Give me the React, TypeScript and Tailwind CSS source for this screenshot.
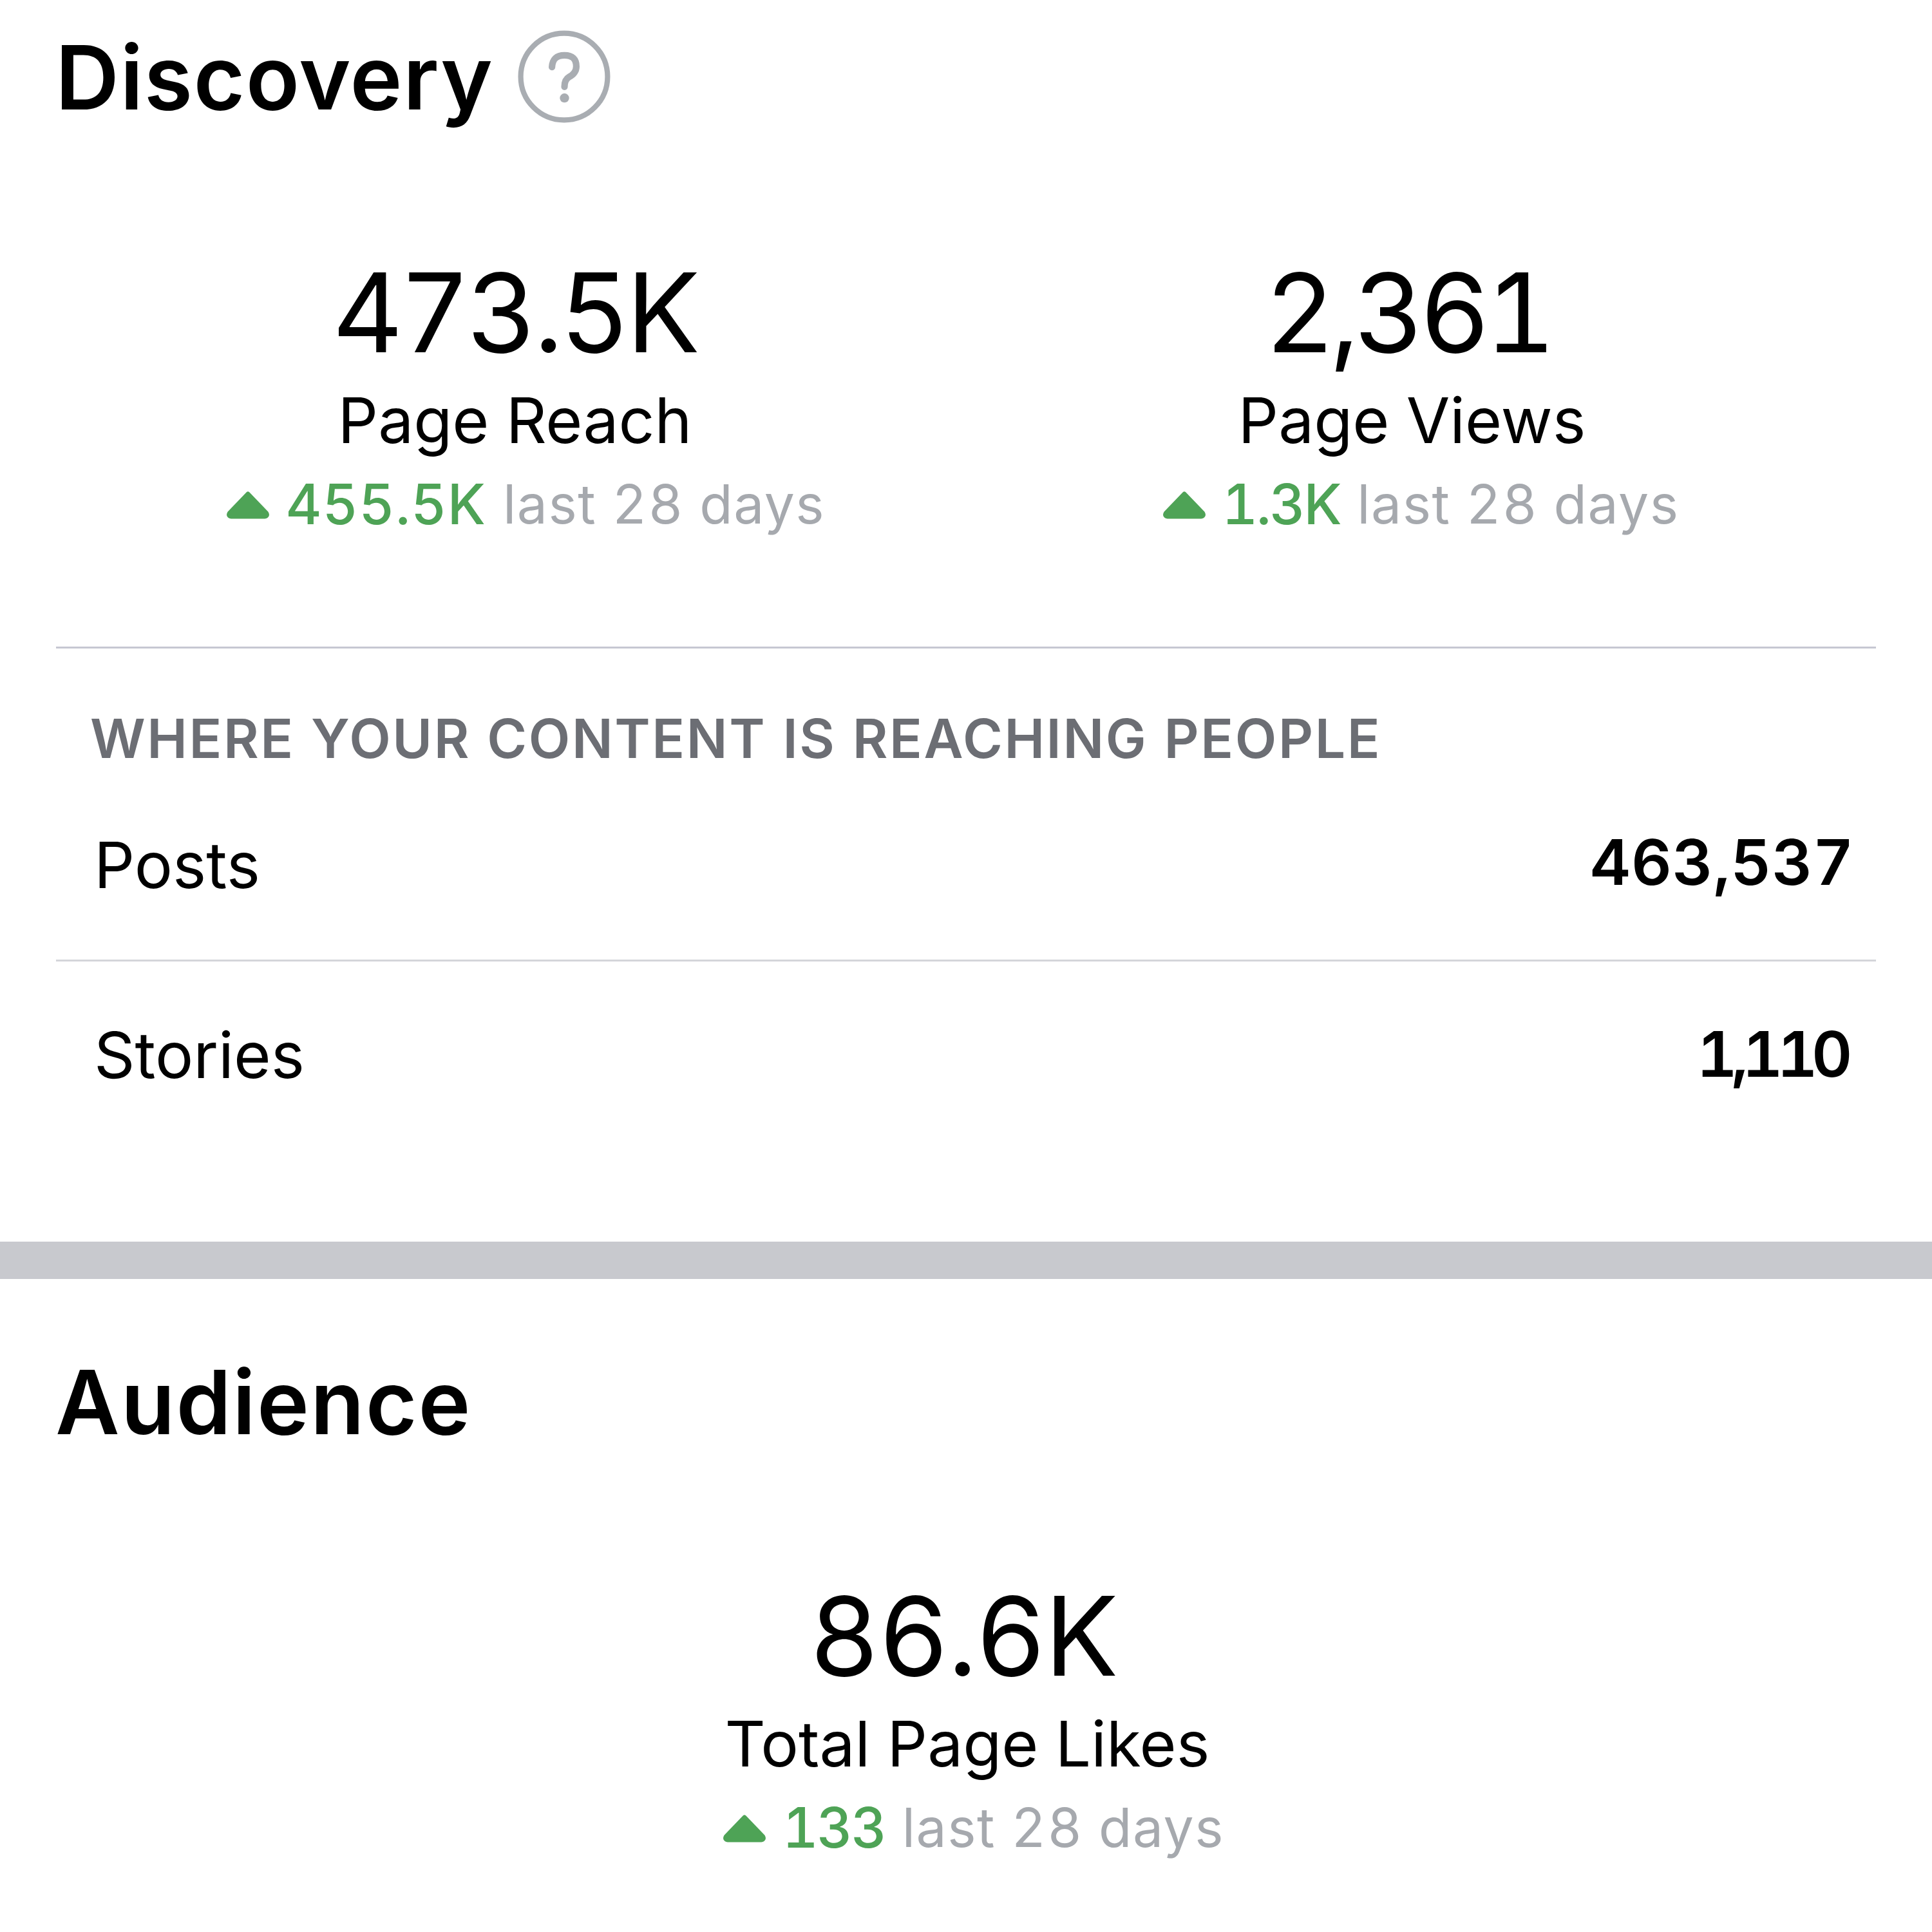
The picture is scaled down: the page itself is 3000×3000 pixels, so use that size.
function Caret() {
  return (
    <svg viewBox="0 0 68 44" className="w-[70px] h-[46px] shrink-0 mr-[24px] mt-[2px]">
      <path d="M34 5 L62 34 Q65 39 59 40 L9 40 Q3 39 6 34 Z" fill="#4ea356" stroke="#4ea356" strokeWidth="6" strokeLinejoin="round" />
    </svg>
  );
}

function Stat({ value, label, delta, a, b, c, d }: { value: string; label: string; delta: string; a: string; b: string; c: string; d: string }) {
  return (
    <div className="flex flex-col items-center">
      <div className={`h-[206px] leading-[206px] text-[170px] text-black ${a}`}>{value}</div>
      <div className={`h-[130px] leading-[130px] text-[98px] text-black ${b}`}>{label}</div>
      <div className={`h-[130px] flex items-center text-[84px] leading-[130px] ${c}`}>
        <Caret />
        <span className={`font-[550] text-[86px] text-[#4ea356] mr-[26px] ${d}`}>{delta}</span>
        <span className="text-[#a6a9ae] tracking-[1.5px]">last 28 days</span>
      </div>
    </div>
  );
}

export default function App() {
  return (
    <div className="w-[3000px] h-[3000px] bg-white overflow-hidden font-['Inter',sans-serif] tabular-nums">
      <section className="h-[1928px] flex flex-col">
        <div className="h-[240px] px-[86px] flex items-center">
          <h2 className="text-[137px] font-semibold tracking-[1.5px] text-black leading-none">Discovery</h2>
          <svg viewBox="0 0 141 141" className="w-[144px] h-[144px] ml-[38px] -mt-[2px]">
            <circle cx="70.5" cy="70.5" r="66" fill="none" stroke="#a9adb2" strokeWidth="8" />
            <path d="M52 56 Q53 38 71 38 Q89 38 89 55 Q89 65 78 71 Q71 75 71 86" fill="none" stroke="#a9adb2" strokeWidth="10" strokeLinecap="round" />
            <circle cx="71" cy="103" r="7" fill="#a9adb2" />
          </svg>
        </div>
        <div className="grid grid-cols-2 px-[113px] pt-[142px] h-[764px]">
          <Stat value="473.5K" label="Page Reach" delta="455.5K" a="mr-[16px] tracking-[-6px]" b="mr-[14px]" c="ml-[18px]" d="tracking-[1px]" />
          <Stat value="2,361" label="Page Views" delta="1.3K" a="mr-[16px] tracking-[-8.5px]" b="mr-[2px]" c="ml-[24px]" d="tracking-[-2.5px]" />
        </div>
        <div className="mx-[87px] border-t-[3px] border-[#c6c7d2]" />
        <div className="h-[280px] pl-[140px] flex items-center">
          <span className="text-[84px] font-semibold text-[#6c6e74] tracking-[2.6px]">WHERE YOUR CONTENT IS REACHING PEOPLE</span>
        </div>
        <div className="h-[203px] pb-[90px] flex justify-between items-center pl-[146px] pr-[121px]">
          <span className="text-[99px] text-black">Posts</span>
          <span className="text-[98px] font-semibold text-black mb-[10px] tracking-[0.5px]">463,537</span>
        </div>
        <div className="mx-[87px] border-t-[3px] border-[#d4d5da]" />
        <div className="h-[290px] flex justify-between items-center pl-[146px] pr-[133px]">
          <span className="text-[99px] text-black">Stories</span>
          <span className="text-[98px] font-semibold text-black tracking-[-9.5px] mb-[4px]">1,110</span>
        </div>
      </section>
      <div className="h-[58px] bg-[#c8c9ce]" />
      <section>
        <div className="h-[382px] px-[86px] flex items-center">
          <h2 className="text-[137px] font-semibold tracking-[2px] text-black leading-none">Audience</h2>
        </div>
        <div className="pt-[69px]">
          <Stat value="86.6K" label="Total Page Likes" delta="133" a="mr-[10px] tracking-[-2.5px]" b="ml-[4px]" c="ml-[22px]" d="tracking-[-2.5px]" />
        </div>
      </section>
    </div>
  );
}
